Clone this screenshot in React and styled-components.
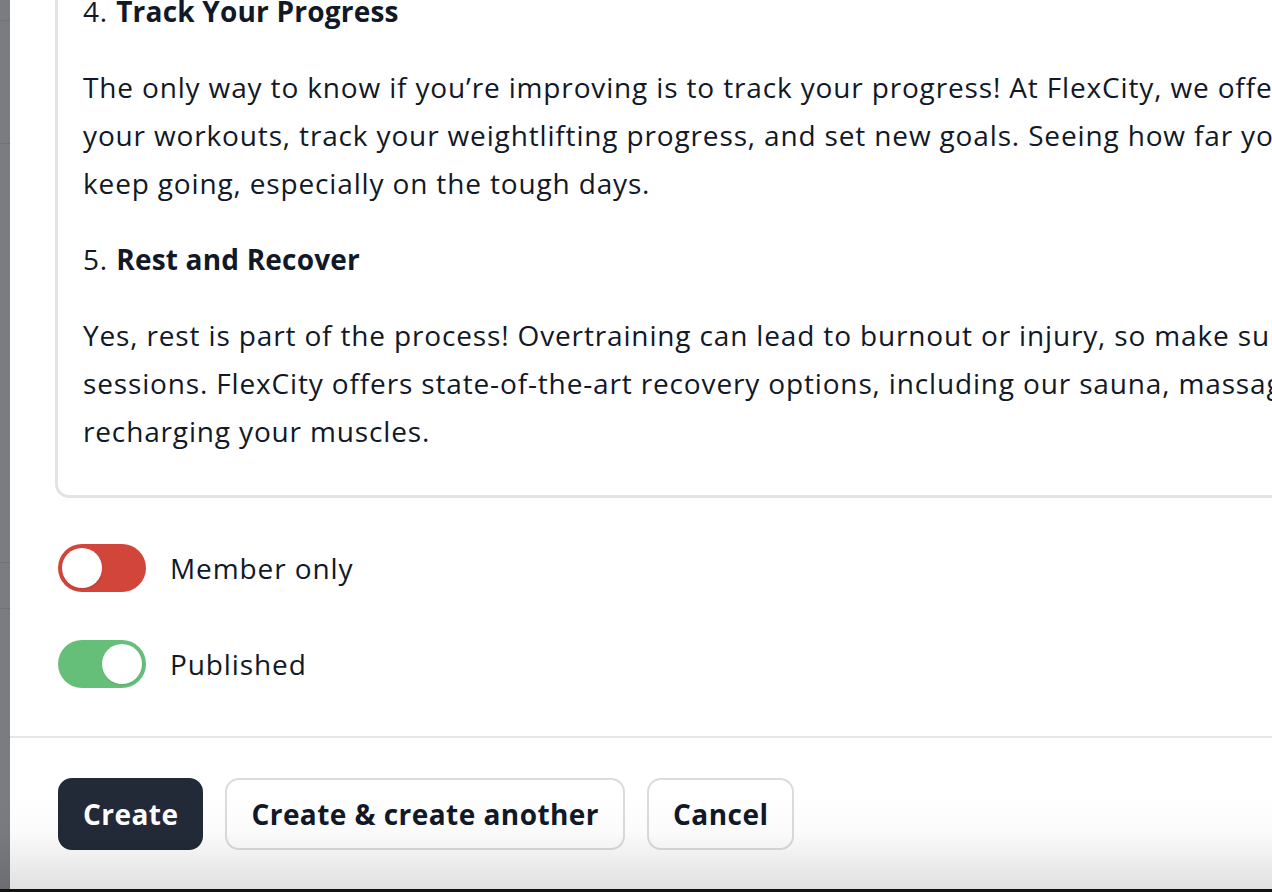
import React, { useState } from "react";
import styled, { createGlobalStyle } from "styled-components";

const GlobalStyle = createGlobalStyle`
  html, body {
    margin: 0;
    padding: 0;
    height: 892px;
    overflow: hidden;
    background: #ffffff;
  }
  body {
    font-family: "Open Sans", "Liberation Sans", sans-serif;
    color: #111827;
  }
`;

const Screen = styled.div`
  display: flex;
  flex-direction: column;
  height: 892px;
  width: 1272px;
  overflow: hidden;
`;

const Main = styled.div`
  position: relative;
  flex: 1;
  display: flex;
  min-height: 0;
`;

const Backdrop = styled.div`
  width: 10px;
  flex-shrink: 0;
  display: flex;
  flex-direction: column;
  background: #7b7c81;
`;

const BackdropRow = styled.div`
  height: ${(props) => props.$h}px;
  flex-shrink: 0;
  border-bottom: 1px solid #707176;
`;

const Panel = styled.div`
  flex: 1;
  display: flex;
  flex-direction: column;
  background: #ffffff;
  overflow: hidden;
  min-width: 0;
`;

const Body = styled.div`
  padding: 0 0 48px 45px;
`;

const Editor = styled.div`
  width: 1700px;
  margin-top: -13px;
  padding: 0 25px 40px 25px;
  border: 3px solid #e3e3e6;
  border-top: none;
  border-radius: 0 0 14px 14px;
  font-size: 28px;
  line-height: 48px;
  letter-spacing: 0.85px;
  color: #111827;
`;

const Heading = styled.p`
  margin: 0;
  white-space: nowrap;

  strong {
    font-weight: 700;
    letter-spacing: 0.2px;
  }
`;

const Paragraph = styled.p`
  margin: 28px 0;
  white-space: nowrap;

  &:last-child {
    margin-bottom: 0;
  }
`;

const ToggleList = styled.div`
  display: flex;
  flex-direction: column;
  gap: 48px;
  margin-top: 46px;
  padding-left: 3px;
`;

const ToggleRow = styled.label`
  display: flex;
  align-items: center;
  gap: 24px;
  cursor: pointer;
`;

const Switch = styled.button`
  position: relative;
  width: 88px;
  height: 48px;
  padding: 0;
  border: none;
  border-radius: 24px;
  background: ${(props) => (props.$on ? "#65bf78" : "#d1453b")};
  cursor: pointer;
  flex-shrink: 0;
`;

const Knob = styled.span`
  position: absolute;
  top: 4px;
  left: 4px;
  width: 40px;
  height: 40px;
  border-radius: 50%;
  background: #ffffff;
  box-shadow: 0 1px 2px rgba(0, 0, 0, 0.12);
  transform: ${(props) => (props.$on ? "translateX(40px)" : "translateX(0)")};
  transition: transform 0.2s;
`;

const ToggleLabel = styled.span`
  font-size: 28px;
  line-height: 48px;
  letter-spacing: 0.9px;
  color: #111827;
`;

const Footer = styled.div`
  display: flex;
  gap: 22px;
  padding: 40px 0 0 48px;
  border-top: 2px solid #e6e6ea;
`;

const Button = styled.button`
  height: 72px;
  padding: 0 ${(props) => (props.$primary ? 23 : 24)}px;
  border-radius: 14px;
  border: 2px solid ${(props) => (props.$primary ? "#222a38" : "#dcdcdf")};
  background: ${(props) => (props.$primary ? "#222a38" : "#ffffff")};
  color: ${(props) => (props.$primary ? "#ffffff" : "#111827")};
  font-family: "Open Sans", "Liberation Sans", sans-serif;
  font-size: 28px;
  font-weight: 700;
  letter-spacing: 0.45px;
  cursor: pointer;
  white-space: nowrap;
`;

const Fade = styled.div`
  position: absolute;
  left: 0;
  right: 0;
  bottom: 0;
  height: 92px;
  pointer-events: none;
  background: linear-gradient(
    to bottom,
    rgba(0, 0, 0, 0) 0%,
    rgba(0, 0, 0, 0.02) 40%,
    rgba(0, 0, 0, 0.12) 100%
  );
`;

const BottomEdge = styled.div`
  height: 3px;
  flex-shrink: 0;
  background: #121212;
`;

const ToggleField = ({ label, on, onToggle }) => (
  <ToggleRow>
    <Switch type="button" $on={on} onClick={onToggle}>
      <Knob $on={on} />
    </Switch>
    <ToggleLabel>{label}</ToggleLabel>
  </ToggleRow>
);

const App = () => {
  const [memberOnly, setMemberOnly] = useState(false);
  const [published, setPublished] = useState(true);

  return (
    <>
      <GlobalStyle />
      <Screen>
        <Main>
          <Backdrop>
            <BackdropRow $h={20} />
            <BackdropRow $h={122} />
            <BackdropRow $h={418} />
            <BackdropRow $h={45} />
          </Backdrop>
          <Panel>
            <Body>
              <Editor>
                <Heading>
                  4. <strong>Track Your Progress</strong>
                </Heading>
                <Paragraph>
                  The only way to know if you’re improving is to track your progress! At FlexCity, we offer tools to log
                  <br />
                  your workouts, track your weightlifting progress, and set new goals. Seeing how far you’ve come will motivate you to
                  <br />
                  keep going, especially on the tough days.
                </Paragraph>
                <Heading>
                  5. <strong>Rest and Recover</strong>
                </Heading>
                <Paragraph>
                  Yes, rest is part of the process! Overtraining can lead to burnout or injury, so make sure to schedule rest days
                  <br />
                  sessions. FlexCity offers state-of-the-art recovery options, including our sauna, massage chairs and cold plunge, for
                  <br />
                  recharging your muscles.
                </Paragraph>
              </Editor>
              <ToggleList>
                <ToggleField
                  label="Member only"
                  on={memberOnly}
                  onToggle={() => setMemberOnly((prev) => !prev)}
                />
                <ToggleField
                  label="Published"
                  on={published}
                  onToggle={() => setPublished((prev) => !prev)}
                />
              </ToggleList>
            </Body>
            <Footer>
              <Button $primary>Create</Button>
              <Button>Create &amp; create another</Button>
              <Button>Cancel</Button>
            </Footer>
          </Panel>
          <Fade />
        </Main>
        <BottomEdge />
      </Screen>
    </>
  );
};

export default App;
